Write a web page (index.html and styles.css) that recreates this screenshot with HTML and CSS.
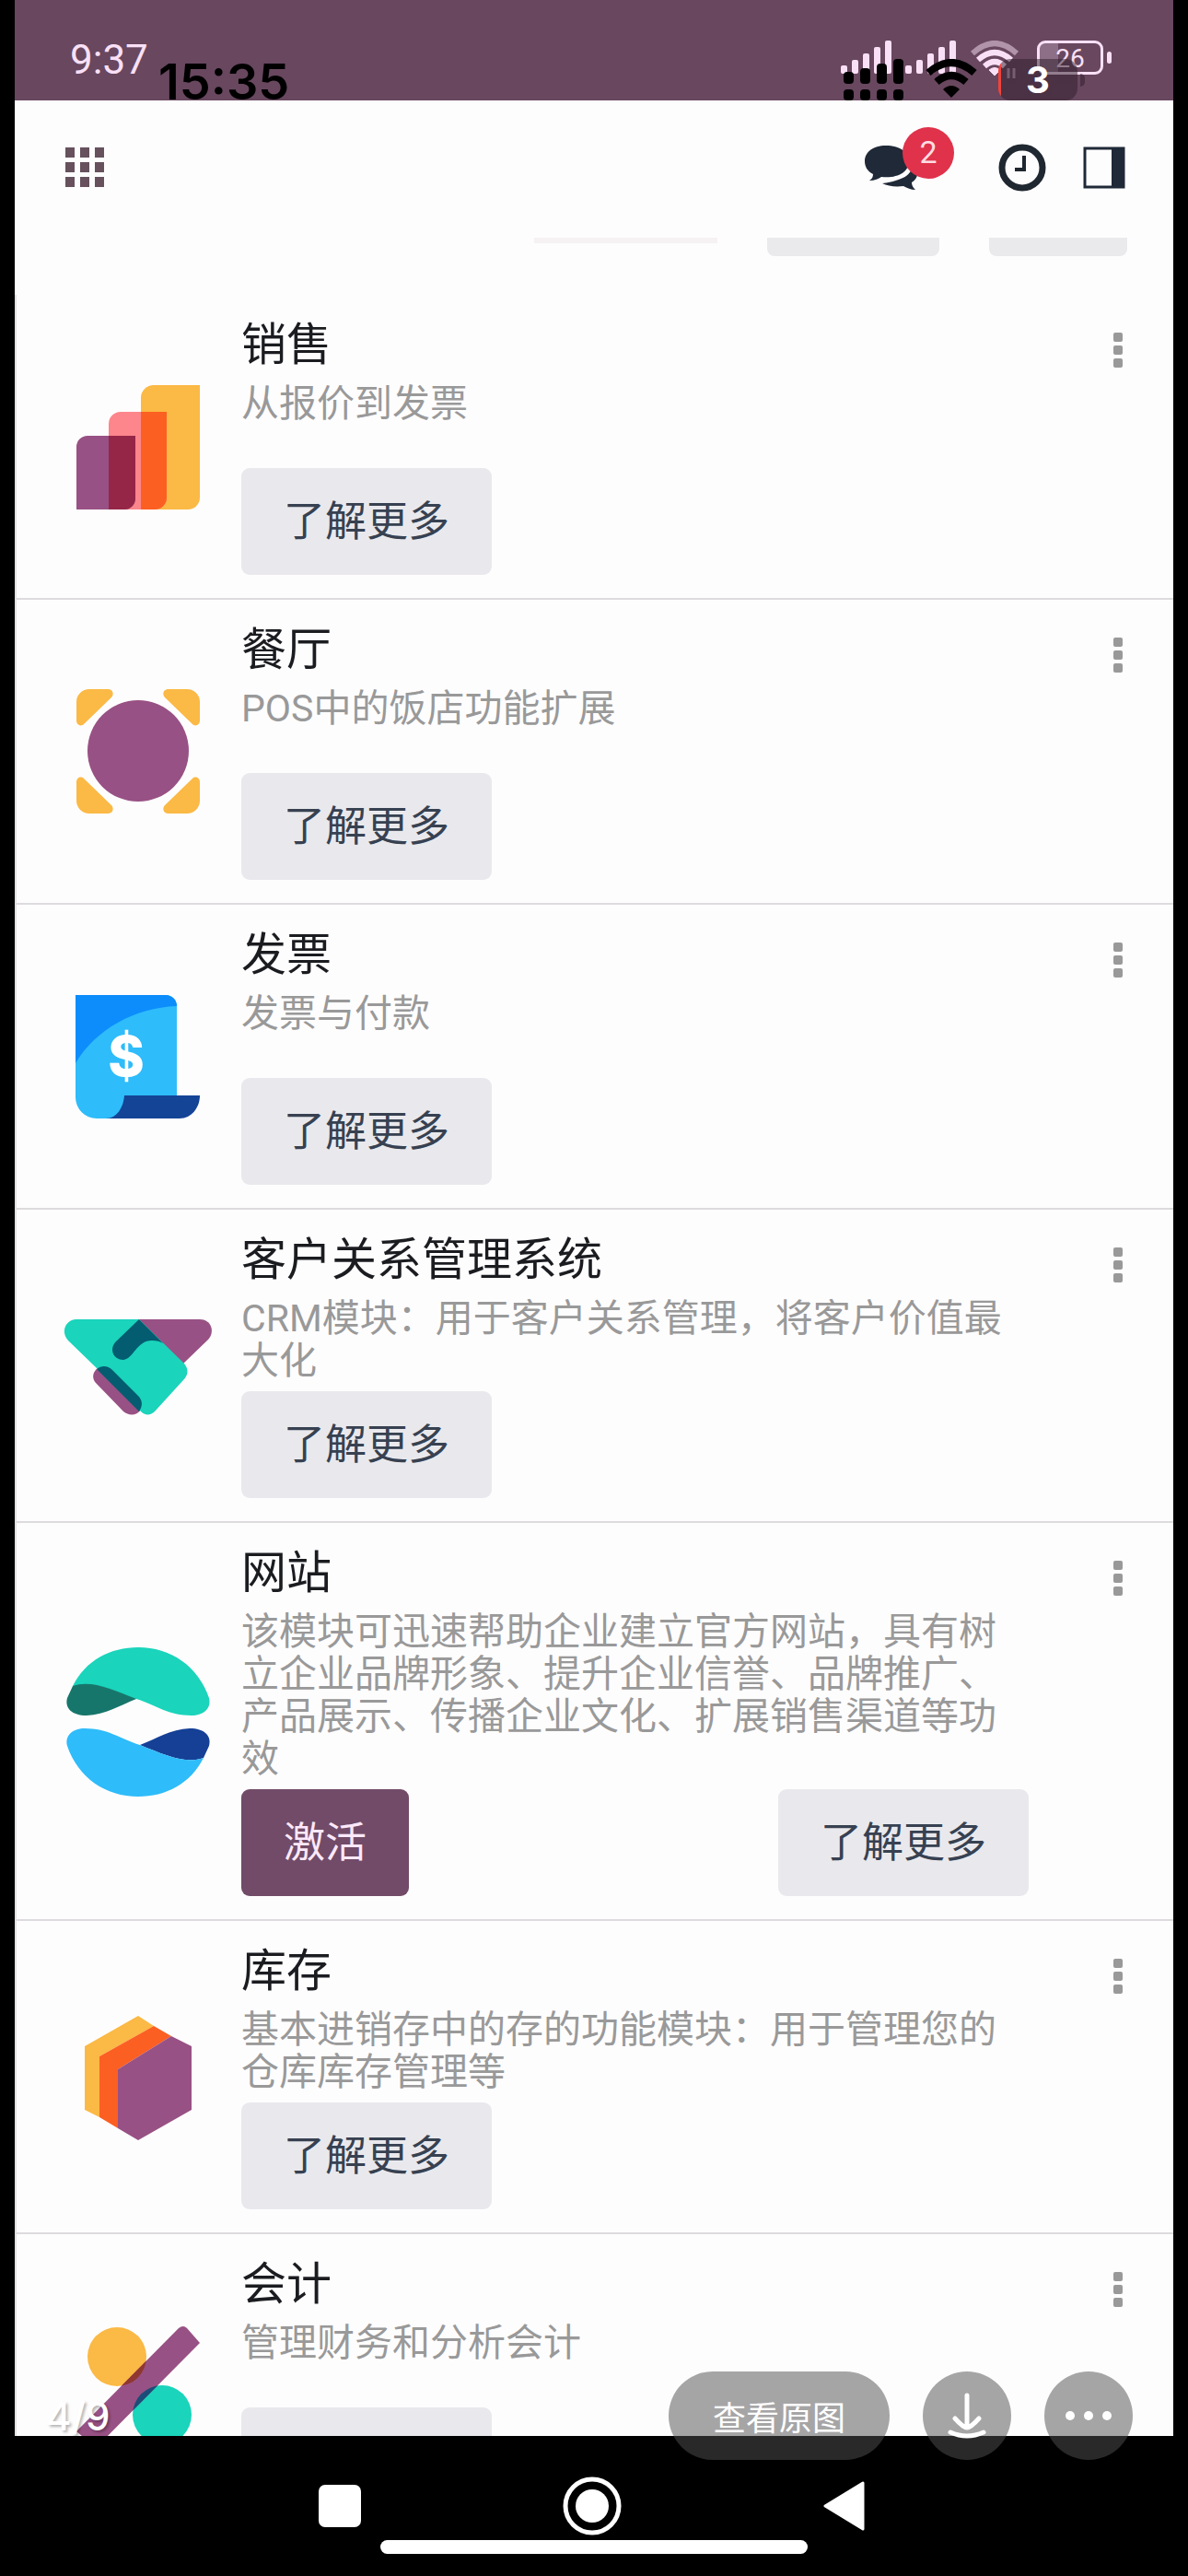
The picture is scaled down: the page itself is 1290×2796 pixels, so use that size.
FILE: index.html
```html
<!DOCTYPE html>
<html lang="zh-CN">
<head>
<meta charset="utf-8">
<meta name="viewport" content="width=device-width, initial-scale=1">
<title>应用</title>
<link rel="stylesheet" href="styles.css">
</head>
<body>
<div class="screen">
  <div class="statusbar">
    <span class="statusbar-time">9:37</span>
    <div class="statusbar-icons">
      <svg width="55" height="36" viewBox="0 0 55 36" fill="currentColor" aria-hidden="true"><rect y="27" width="7" height="9" rx="2"/><rect x="12" y="21" width="7" height="15" rx="2"/><rect x="24" y="14" width="7" height="22" rx="2"/><rect x="36" y="7" width="7" height="29" rx="2"/><rect x="48" width="7" height="36" rx="2"/></svg>
      <svg width="55" height="36" viewBox="0 0 55 36" fill="currentColor" aria-hidden="true"><rect y="27" width="7" height="9" rx="2"/><rect x="12" y="21" width="7" height="15" rx="2"/><rect x="24" y="14" width="7" height="22" rx="2"/><rect x="36" y="7" width="7" height="29" rx="2"/><rect x="48" width="7" height="36" rx="2"/></svg>
      <svg width="54" height="42" viewBox="0 0 54 42" fill="none" stroke="currentColor" stroke-width="6" aria-hidden="true"><path d="M3 14Q27-8 51 14" opacity=".5"/><path d="M9 21Q27 5 45 21"/><path d="M16 28Q27 18 38 28"/><path d="M27 38L21 32Q27 27 33 32Z" fill="currentColor" stroke-width="1"/><path d="M42 30V41M48 30V41" stroke-width="3" opacity=".6"/></svg>
      <span class="battery">26</span>
    </div>
  </div>

  <header class="navbar">
    <button class="icon-btn" aria-label="应用菜单"><svg width="42" height="43" viewBox="0 0 42 43" fill="#66515d"><path d="M0 0h10v11H0zM16 0h10v11H16zM32 0h10v11H32zM0 16h10v11H0zM16 16h10v11H16zM32 16h10v11H32zM0 32h10v11H0zM16 32h10v11H16zM32 32h10v11H32z"/></svg></button>
    <div class="navbar-tools">
      <button class="icon-btn chat" aria-label="消息"><svg width="57" height="50" viewBox="0 0 57 50" fill="#1f2937"><path d="M23 1C9 1 0 8 0 18c0 6 3 11 9 14 0 3-1 5-4 7 6 0 10-2 13-4 17 2 30-5 30-17C48 8 38 1 23 1z"/><path d="M51 24c0 8-9 15-32 18 6 3 14 4 23 3 4 2 8 4 13 4-3-3-4-5-4-8 8-6 8-12 0-17z"/></svg><span class="badge">2</span></button>
      <button class="icon-btn" aria-label="活动"><svg width="52" height="52" viewBox="0 0 52 52" fill="none" stroke="#1f2730"><circle cx="26" cy="26" r="22" stroke-width="7"/><path d="M28 13V28H18" stroke-width="4"/></svg></button>
      <button class="icon-btn" aria-label="侧栏"><svg width="46" height="46" viewBox="0 0 46 46"><path d="M2 2H44V44H2Z" fill="none" stroke="#1f2937" stroke-width="3"/><path d="M31 1H45V45H31Z" fill="#1f2937"/></svg></button>
    </div>
  </header>

  <div class="cut-card" aria-hidden="true"><span class="cut-link"></span><span class="cut-wide"></span><span class="cut-narrow"></span></div>

  <main class="apps">
    <article class="app">
      <svg class="app-icon" viewBox="0 0 162 162" aria-hidden="true"><path d="M84 28a14 14 0 0 1 14-14h50v122a13 13 0 0 1-13 13H84z" fill="#fbb945"/><path d="M49 56a13 13 0 0 1 13-13h50v93a13 13 0 0 1-13 13H49z" fill="#fc868b"/><path d="M84 43h28v93a13 13 0 0 1-13 13H84z" fill="#fc5f22"/><path d="M14 81a12 12 0 0 1 12-12h52v68a12 12 0 0 1-12 12H14z" fill="#985184"/><path d="M49 69h29v68a12 12 0 0 1-12 12H49z" fill="#962648"/></svg>
      <div class="app-body"><h2>销售</h2><p>从报价到发票</p><div class="actions"><button class="btn">了解更多</button></div></div>
      <button class="kebab" aria-label="更多选项"><i></i><i></i><i></i></button>
    </article>
    <article class="app">
      <svg class="app-icon" viewBox="0 0 162 162" aria-hidden="true"><g fill="#fbb945"><path id="corner" d="M14 27a14 14 0 0 1 14-14H48c6 0 7 6 4 9L22 51c-3 3-8 1-8-4z"/><use href="#corner" transform="matrix(-1 0 0 1 162 0)"/><use href="#corner" transform="matrix(1 0 0 -1 0 161)"/><use href="#corner" transform="matrix(-1 0 0 -1 162 161)"/></g><circle cx="81" cy="80" r="55" fill="#985184"/></svg>
      <div class="app-body"><h2>餐厅</h2><p>POS中的饭店功能扩展</p><div class="actions"><button class="btn">了解更多</button></div></div>
      <button class="kebab" aria-label="更多选项"><i></i><i></i><i></i></button>
    </article>
    <article class="app">
      <svg class="app-icon" viewBox="0 0 162 162" aria-hidden="true"><path d="M60 123h88c0 13-9 25-22 25H40z" fill="#144496"/><path d="M13 14h98a12 12 0 0 1 12 12v97H66c-1 13-8 25-20 25H36a23 23 0 0 1-23-23z" fill="#2ebcfa"/><path d="M13 14h98a12 12 0 0 1 12 12C77 28 35 51 13 88z" fill="#0d8dfb"/><text x="68" y="102" text-anchor="middle" class="dollar">$</text></svg>
      <div class="app-body"><h2>发票</h2><p>发票与付款</p><div class="actions"><button class="btn">了解更多</button></div></div>
      <button class="kebab" aria-label="更多选项"><i></i><i></i><i></i></button>
    </article>
    <article class="app">
      <svg class="app-icon" viewBox="0 0 162 162" aria-hidden="true"><path d="M82 30h66c12 0 17 13 9 22L129 79z" fill="#985184"/><path d="M44 81c-9 0-16 10-9 18l30 31c6 5 14 5 19-2z" fill="#985184"/><path d="M14 30H82L130 77c6 6 6 13 0 19L99 130c-5 5-11 4-15 0L36 83 5 53C-4 43 3 30 14 30z" fill="#1ad4bb"/><path d="M36 84c5-4 12-4 17 1l28 28c5 5 5 11 1 17z" fill="#045c70"/><path d="M82 30L57 54c-8 8-3 20 8 20 11-1 14-21 31-21 5 0 9 1 12 3z" fill="#045c70"/></svg>
      <div class="app-body"><h2>客户关系管理系统</h2><p>CRM模块：用于客户关系管理，将客户价值最大化</p><div class="actions"><button class="btn">了解更多</button></div></div>
      <button class="kebab" aria-label="更多选项"><i></i><i></i><i></i></button>
    </article>
    <article class="app">
      <svg class="app-icon" viewBox="0 0 162 162" aria-hidden="true"><path d="M10 42C24 14 51 0 81 0c35 0 65 20 77 55 3 12-7 19-19 19-25 0-38-11-60-18L30 60z" fill="#1ad4bb"/><path d="M10 42c19-7 42 3 69 14C61 63 46 73 25 74 9 74 1 66 4 55z" fill="#17766b"/><path d="M152 120c-19 7-42-3-69-14 18-7 33-17 54-18 16 0 24 8 21 19z" fill="#154096"/><path d="M152 120C138 148 111 162 81 162 46 162 16 142 4 107c-3-12 7-19 19-19 25 0 38 11 60 18 27 11 50 21 69 14z" fill="#2ebcfa"/></svg>
      <div class="app-body"><h2>网站</h2><p>该模块可迅速帮助企业建立官方网站，具有树立企业品牌形象、提升企业信誉、品牌推广、产品展示、传播企业文化、扩展销售渠道等功效</p><div class="actions"><button class="btn primary">激活</button><button class="btn">了解更多</button></div></div>
      <button class="kebab" aria-label="更多选项"><i></i><i></i><i></i></button>
    </article>
    <article class="app">
      <svg class="app-icon" viewBox="0 0 162 162" aria-hidden="true"><path d="M81 14L98 25 39 58V124L23 116V47Z" fill="#fbb945"/><path d="M98 25L117 36 59 72V136L39 124V58Z" fill="#fc5f22"/><path d="M117 36L139 47V116L81 149 59 136V72Z" fill="#985184"/></svg>
      <div class="app-body"><h2>库存</h2><p>基本进销存中的存的功能模块：用于管理您的仓库库存管理等</p><div class="actions"><button class="btn">了解更多</button></div></div>
      <button class="kebab" aria-label="更多选项"><i></i><i></i><i></i></button>
    </article>
    <article class="app">
      <svg class="app-icon" viewBox="0 0 162 162" aria-hidden="true"><defs><clipPath id="slash"><path d="M14 130L125 18q5-4 9 0l14 16L35 148z"/></clipPath></defs><circle cx="58" cy="49" r="32" fill="#fbb945"/><circle cx="107" cy="112" r="32" fill="#1ad4bb"/><g clip-path="url(#slash)"><path d="M0 0h162v162H0z" fill="#985184"/><circle cx="58" cy="49" r="32" fill="#8f3730"/><circle cx="107" cy="112" r="32" fill="#1c4c78"/></g></svg>
      <div class="app-body"><h2>会计</h2><p>管理财务和分析会计</p><div class="actions"><button class="btn btn-blank" aria-label="了解更多"></button></div></div>
      <button class="kebab" aria-label="更多选项"><i></i><i></i><i></i></button>
    </article>
  </main>

  <nav class="sysnav">
    <button class="icon-btn" aria-label="最近任务"><svg width="46" height="46" viewBox="0 0 46 46"><rect width="46" height="46" rx="7" fill="#fff"/></svg></button>
    <button class="icon-btn" aria-label="主页"><svg width="66" height="66" viewBox="0 0 66 66"><circle cx="33" cy="33" r="29" fill="none" stroke="#fff" stroke-width="5"/><circle cx="33" cy="33" r="18" fill="#fff"/></svg></button>
    <button class="icon-btn" aria-label="返回"><svg width="46" height="54" viewBox="0 0 46 54"><path d="M43 2V52L2 27Z" fill="#fff" stroke="#fff" stroke-width="3" stroke-linejoin="round"/></svg></button>
  </nav>
</div>

<div class="viewer-status">
  <span>15:35</span>
  <div class="viewer-icons">
    <svg width="66" height="45" viewBox="0 0 66 45" aria-hidden="true"><rect y="14" width="11" height="13" rx="4"/><rect x="18" y="10" width="11" height="17" rx="4"/><rect x="36" y="5" width="11" height="22" rx="4"/><rect x="54" width="11" height="27" rx="4"/><rect y="33" width="11" height="12" rx="4"/><rect x="18" y="33" width="11" height="12" rx="4"/><rect x="36" y="33" width="11" height="12" rx="4"/><rect x="54" y="33" width="11" height="12" rx="4"/></svg>
    <svg width="58" height="42" viewBox="0 0 58 42" aria-hidden="true"><path d="M4 15Q29-7 54 15" fill="none" stroke="#000" stroke-width="8"/><path d="M13 25Q29 11 45 25" fill="none" stroke="#000" stroke-width="8"/><path d="M20 33Q29 25 38 33L29 42Z"/></svg>
    <span class="viewer-battery">3</span>
  </div>
</div>

<div class="viewer-tools">
  <span class="counter">4/9</span>
  <button class="pill">查看原图</button>
  <button class="pill round" aria-label="下载"><svg width="44" height="52" viewBox="0 0 44 52" fill="none" stroke="#fff" stroke-width="5" stroke-linecap="round" stroke-linejoin="round"><path d="M22 4V38M9 29Q18 39 22 39Q26 39 35 29M4 44Q22 52 40 44"/></svg></button>
  <button class="pill round" aria-label="更多"><svg width="50" height="10" viewBox="0 0 50 10" fill="#fff"><circle cx="5" cy="5" r="5"/><circle cx="25" cy="5" r="5"/><circle cx="45" cy="5" r="5"/></svg></button>
</div>
<div class="home-indicator"></div>
</body>
</html>
```
FILE: styles.css
```css
* {
  box-sizing: border-box;
}

body {
  margin: 0;
  position: relative;
  height: 100vh;
  overflow: hidden;
  background: #000;
  font-family: Roboto, "Noto Sans CJK SC", sans-serif;
}

button {
  margin: 0;
  border: 0;
  background: none;
  font-family: inherit;
}

svg {
  display: block;
}

.screen {
  display: flex;
  flex-direction: column;
  height: 100vh;
  margin: 0 16px;
  background: #fefdfe;
}

/* status bar */
.statusbar {
  flex: none;
  display: flex;
  justify-content: space-between;
  align-items: flex-start;
  height: 109px;
  padding: 44px 76px 0 60px;
  background: #68475f;
  color: #f9e0f6;
}

.statusbar-time {
  font-size: 44px;
  line-height: 42px;
}

.statusbar-icons {
  display: flex;
  gap: 15px;
}

.battery {
  position: relative;
  width: 72px;
  height: 37px;
  margin-left: 4px;
  border: 3px solid currentColor;
  border-radius: 9px;
  background: linear-gradient(90deg, #8d7088 30%, transparent 30%);
  font-size: 28px;
  line-height: 34px;
  text-align: center;
}

.battery::after {
  content: "";
  position: absolute;
  top: 9px;
  right: -12px;
  width: 5px;
  height: 13px;
  border-radius: 3px;
  background: currentColor;
}

/* top bar */
.navbar {
  flex: none;
  display: flex;
  justify-content: space-between;
  align-items: center;
  height: 149px;
  padding: 0 52px 4px 55px;
}

.icon-btn {
  padding: 0;
}

.navbar-tools {
  display: flex;
  align-items: center;
  gap: 40px;
}

.chat {
  position: relative;
  margin-right: 48px;
}

.badge {
  position: absolute;
  left: 41px;
  top: -19px;
  width: 56px;
  height: 56px;
  border-radius: 50%;
  background: #e0324b;
  color: #ffdde2;
  font-size: 34px;
  line-height: 54px;
}

/* card scrolled under the top bar */
.cut-card {
  flex: none;
  display: flex;
  justify-content: flex-end;
  align-items: flex-start;
  gap: 54px;
  height: 62px;
  padding-right: 50px;
}

.cut-link {
  width: 199px;
  height: 6px;
  background: #f6f2f4;
}

.cut-wide,
.cut-narrow {
  height: 20px;
  border-radius: 0 0 8px 8px;
  background: #eaeaec;
}

.cut-wide {
  width: 187px;
}

.cut-narrow {
  width: 150px;
}

/* app list */
.apps {
  flex: 1;
  min-height: 0;
  overflow-y: auto;
  scrollbar-width: none;
  border-left: 2px solid #e4e0e3;
}

.app {
  display: flex;
  padding: 23px 50px 25px 51px;
  border-bottom: 2px solid #dddbdd;
}

.app-icon {
  flex: none;
  align-self: center;
  width: 162px;
  height: 162px;
  margin: 3px 31px 0 0;
  overflow: visible;
}

.dollar {
  fill: #fff;
  font-family: Inter, sans-serif;
  font-size: 60px;
  font-weight: 800;
}

.app-body {
  flex: 1;
  margin-right: 87px;
}

.app h2 {
  margin: 0 0 8px;
  color: #1a1c20;
  font-size: 49px;
  font-weight: 400;
  line-height: 64px;
}

.app p {
  min-height: 83px;
  margin: 0 0 10px;
  color: #999;
  font-size: 41px;
  line-height: 46px;
}

.actions {
  display: flex;
  justify-content: space-between;
}

.btn {
  height: 116px;
  padding: 0 46px 8px;
  border-radius: 9px;
  background: #e9e9ed;
  color: #374151;
  font-size: 45px;
}

.btn.primary {
  background: #714b67;
  color: #fbe8fa;
}

.btn-blank {
  width: 272px;
}

.kebab {
  display: flex;
  flex-direction: column;
  align-self: flex-start;
  gap: 4px;
  margin-top: 18px;
  padding: 0 5px;
}

.kebab i {
  width: 10px;
  height: 10px;
  border-radius: 2px;
  background: #999;
}

/* system navigation */
.sysnav {
  flex: none;
  display: flex;
  justify-content: center;
  align-items: center;
  gap: 218px;
  height: 152px;
  padding-right: 4px;
  background: #000;
}

/* photo viewer layer */
.viewer-status {
  position: absolute;
  top: 64px;
  left: 172px;
  right: 120px;
  display: flex;
  justify-content: space-between;
  font-family: Inter, sans-serif;
  font-size: 54px;
  font-weight: 600;
  line-height: 50px;
}

.viewer-icons {
  display: flex;
  gap: 22px;
}

.viewer-battery {
  position: relative;
  width: 86px;
  height: 45px;
  border-radius: 13px;
  background: linear-gradient(90deg, #f0433c 3px, rgba(45, 28, 40, 0.5) 3px);
  color: #fff;
  font-size: 40px;
  font-weight: 700;
  line-height: 46px;
  text-align: center;
}

.viewer-battery::after {
  content: "";
  position: absolute;
  top: 16px;
  right: -8px;
  width: 5px;
  height: 14px;
  border-radius: 0 5px 5px 0;
  background: rgba(45, 28, 40, 0.5);
}

.viewer-tools {
  position: absolute;
  bottom: 126px;
  left: 50px;
  right: 60px;
  display: flex;
  align-items: center;
  gap: 36px;
}

.counter {
  margin-right: auto;
  color: #fff;
  font-family: Inter, sans-serif;
  font-size: 42px;
  font-weight: 500;
  text-shadow: 2px 2px 3px rgba(0, 0, 0, 0.3);
}

.pill {
  display: flex;
  justify-content: center;
  align-items: center;
  width: 240px;
  height: 96px;
  padding: 0;
  border-radius: 48px;
  background: rgba(80, 80, 80, 0.51);
  color: #fff;
  font-size: 36px;
}

.round {
  width: 96px;
}

.home-indicator {
  position: absolute;
  bottom: 24px;
  left: 32%;
  right: 32%;
  height: 15px;
  border-radius: 8px;
  background: #fff;
}
```
